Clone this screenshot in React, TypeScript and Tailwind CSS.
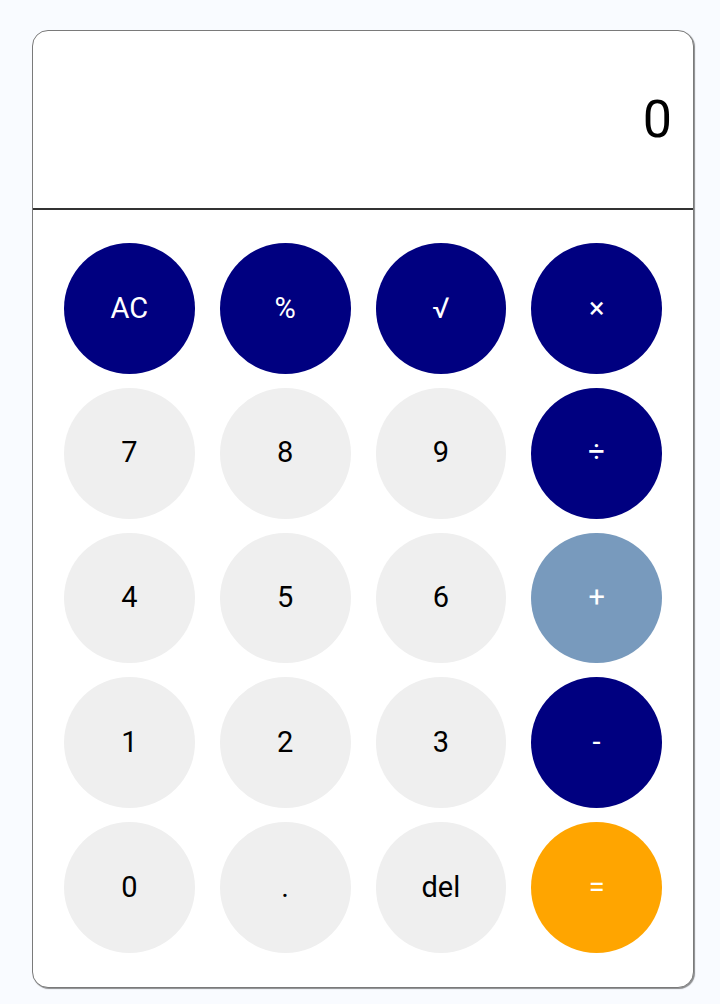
const keys: { label: string; kind: "op" | "num" | "plus" | "eq" }[] = [
  { label: "AC", kind: "op" },
  { label: "%", kind: "op" },
  { label: "√", kind: "op" },
  { label: "×", kind: "op" },
  { label: "7", kind: "num" },
  { label: "8", kind: "num" },
  { label: "9", kind: "num" },
  { label: "÷", kind: "op" },
  { label: "4", kind: "num" },
  { label: "5", kind: "num" },
  { label: "6", kind: "num" },
  { label: "+", kind: "plus" },
  { label: "1", kind: "num" },
  { label: "2", kind: "num" },
  { label: "3", kind: "num" },
  { label: "-", kind: "op" },
  { label: "0", kind: "num" },
  { label: ".", kind: "num" },
  { label: "del", kind: "num" },
  { label: "=", kind: "eq" },
];

const styles = {
  op: "bg-[#000080] text-white",
  num: "bg-[#efefef] text-black",
  plus: "bg-[#789abd] text-white",
  eq: "bg-[#ffa500] text-white",
};

export default function App() {
  return (
    <div className="min-h-screen bg-[#f9fbff] pt-[30px] pb-[17px] pl-[32px] pr-[26px] font-['Roboto',sans-serif]">
      <div className="bg-white border border-[#7a7a7a] rounded-[16px] shadow-[1px_1px_1px_rgba(0,0,0,0.45)] overflow-hidden">
        {/* Display */}
        <div className="h-[179px] border-b-2 border-[#333] flex items-center justify-end pr-[21px]">
          <span className="text-[52px] leading-none text-black">0</span>
        </div>

        {/* Keypad */}
        <div className="grid grid-cols-4 gap-x-[25px] gap-y-[14px] px-[31px] pt-[33px] pb-[34px]">
          {keys.map((k) => (
            <button
              key={k.label}
              className={`w-full aspect-square rounded-full flex items-center justify-center text-[29px] ${styles[k.kind]}`}
            >
              {k.label}
            </button>
          ))}
        </div>
      </div>
    </div>
  );
}
